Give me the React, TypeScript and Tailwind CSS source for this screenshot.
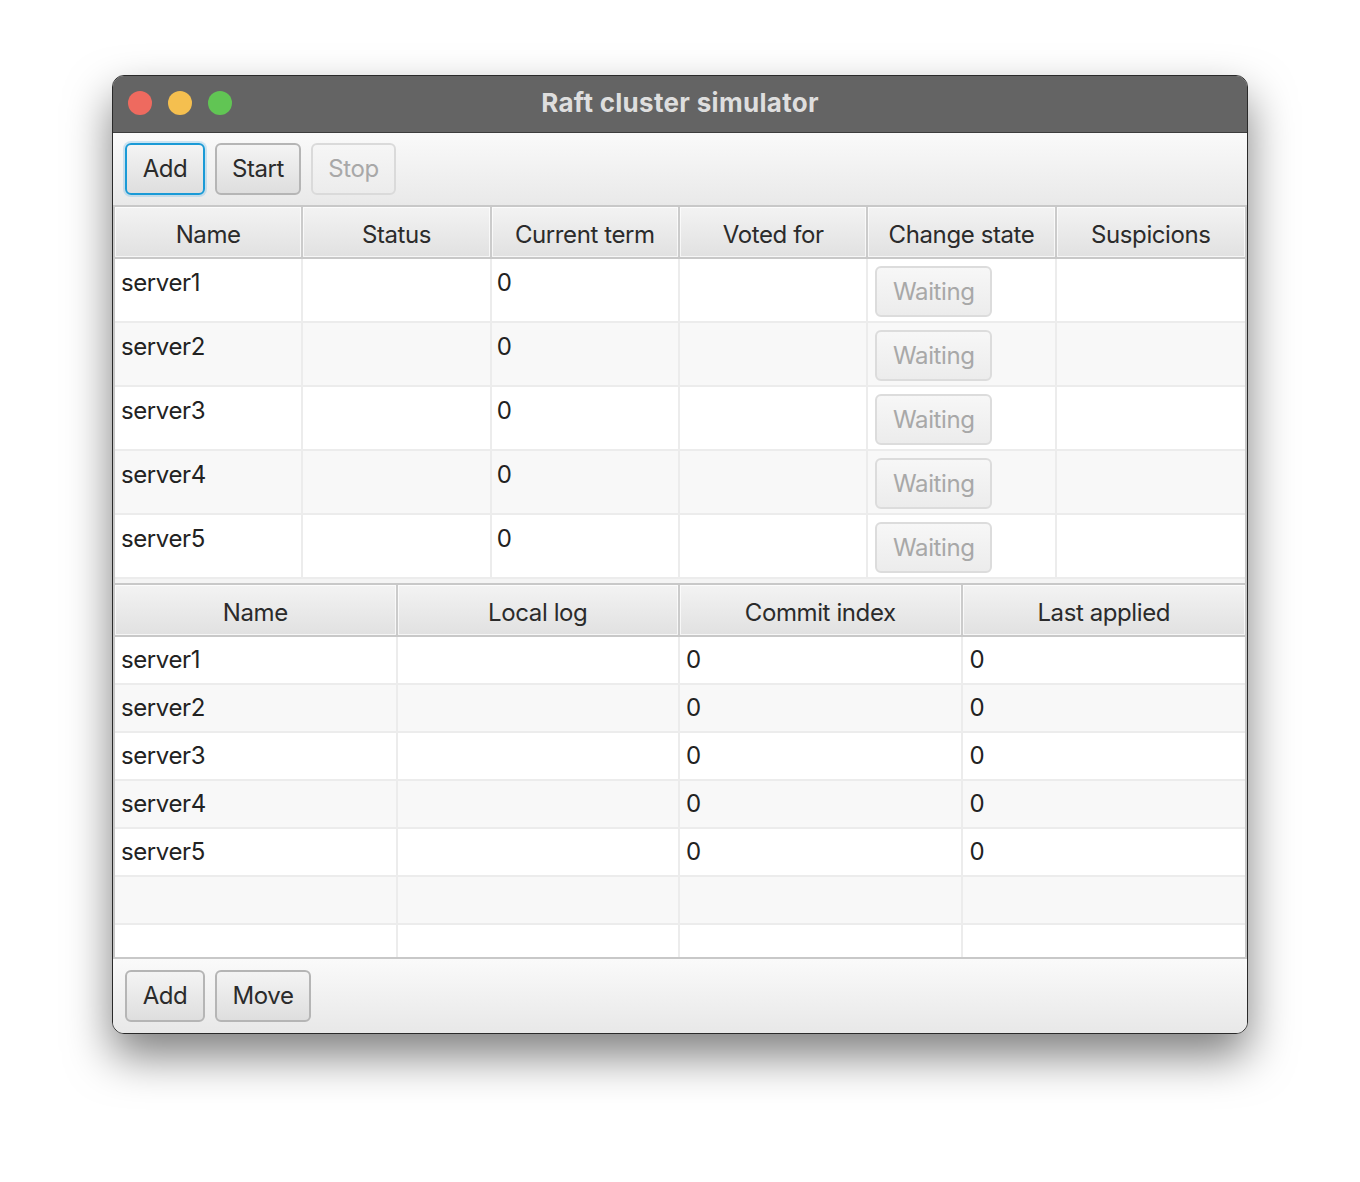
import React from "react";

const font = { fontFamily: "Inter, 'Noto Sans', sans-serif" };

function Btn({ label, focused, disabled, w }: { label: string; focused?: boolean; disabled?: boolean; w: string }) {
  const border = focused
    ? "border-[#1a9ad6] shadow-[0_0_0_2px_rgba(120,190,230,0.35)]"
    : disabled
    ? "border-[#dadada]"
    : "border-[#b5b5b5]";
  return (
    <div
      className={`${w} h-[52px] rounded-[6px] border-2 ${border} bg-gradient-to-b flex items-center justify-center text-[24px] tracking-[-0.4px] ${
        disabled ? "text-[#a8a8a8] from-[#f6f6f6] to-[#ececec]" : "text-[#2b2b2b] from-[#f4f4f4] to-[#dedede]"
      }`}
    >
      {label}
    </div>
  );
}

function HeaderCell({ label, last }: { label: string; last?: boolean }) {
  return (
    <div
      className={`h-[50px] flex items-center justify-center pt-[5px] text-[24px] tracking-[-0.4px] text-[#2b2b2b] bg-gradient-to-b from-[#f3f3f3] to-[#e1e1e1] shadow-[inset_0_0_0_1px_rgba(255,255,255,0.7)] ${
        last ? "" : "border-r-2 border-[#cbcbcb]"
      }`}
    >
      {label}
    </div>
  );
}

const servers = ["server1", "server2", "server3", "server4", "server5"];

export default function App() {
  return (
    <div className="w-[1360px] h-[1182px] bg-white pt-[75px] pl-[112px]" style={font}>
      <div className="w-[1136px] h-[959px] rounded-[12px] border border-[#2a2a2a] overflow-hidden shadow-[0_22px_45px_rgba(0,0,0,0.5)] flex flex-col bg-[#f2f2f2]">
        {/* title bar */}
        <div className="h-[57px] bg-[#646464] border-b border-[#3d3d3d] relative flex items-center justify-center pb-[3px] shrink-0">
          <div className="absolute left-[15px] top-[15px] flex gap-[16px]">
            <div className="w-[24px] h-[24px] rounded-full bg-[#ee6a5f]" />
            <div className="w-[24px] h-[24px] rounded-full bg-[#f5bf4f]" />
            <div className="w-[24px] h-[24px] rounded-full bg-[#61c554]" />
          </div>
          <div className="text-[26px] font-bold text-[#dedede] tracking-[0.3px]">Raft cluster simulator</div>
        </div>
        {/* toolbar */}
        <div className="h-[72px] shrink-0 bg-gradient-to-b from-[#fafafa] to-[#e9e9e9] flex items-start pt-[10px] pl-[12px] gap-[10px]">
          <Btn label="Add" focused w="w-[80px]" />
          <Btn label="Start" w="w-[86px]" />
          <Btn label="Stop" disabled w="w-[85px]" />
        </div>
        {/* table 1 */}
        <div className="border-2 border-[#c8c8c8] border-b-0 mx-0 bg-white">
          <div className="grid grid-cols-6 border-b-2 border-[#c8c8c8]">
            {["Name", "Status", "Current term", "Voted for", "Change state", "Suspicions"].map((h, i) => (
              <HeaderCell key={h} label={h} last={i === 5} />
            ))}
          </div>
          {servers.map((s, r) => (
            <div
              key={s}
              className={`grid grid-cols-6 h-[64px] border-b-2 border-[#ececec] ${r % 2 === 1 ? "bg-[#f8f8f8]" : "bg-white"}`}
            >
              <div className="border-r-2 border-[#ececec] pl-[6px] pt-[8px] text-[24px] tracking-[-0.4px] leading-[32px] text-[#222]">{s}</div>
              <div className="border-r-2 border-[#ececec]" />
              <div className="border-r-2 border-[#ececec] pl-[5px] pt-[8px] text-[24px] leading-[32px] text-[#222]">0</div>
              <div className="border-r-2 border-[#ececec]" />
              <div className="border-r-2 border-[#ececec] pl-[7px] pt-[7px]">
                <div className="w-[117px] h-[51px] rounded-[6px] border-2 border-[#dcdcdc] bg-gradient-to-b from-[#f7f7f7] to-[#ececec] flex items-center justify-center text-[24px] tracking-[-0.4px] text-[#a8a8a8]">
                  Waiting
                </div>
              </div>
              <div />
            </div>
          ))}
        </div>
        <div className="h-[4px] shrink-0 bg-[#f4f4f4] border-x-2 border-[#c8c8c8]" />
        {/* table 2 */}
        <div className="border-2 border-[#c8c8c8] bg-white flex-1 flex flex-col overflow-hidden">
          <div className="grid grid-cols-4 border-b-2 border-[#c8c8c8] shrink-0">
            {["Name", "Local log", "Commit index", "Last applied"].map((h, i) => (
              <HeaderCell key={h} label={h} last={i === 3} />
            ))}
          </div>
          {[...servers, "", "", ""].map((s, r) => (
            <div
              key={r}
              className={`grid grid-cols-4 h-[48px] shrink-0 border-b-2 border-[#ececec] ${r % 2 === 1 ? "bg-[#f8f8f8]" : "bg-white"}`}
            >
              <div className="border-r-2 border-[#ececec] pl-[6px] flex items-center text-[24px] tracking-[-0.4px] text-[#222]">{s}</div>
              <div className="border-r-2 border-[#ececec]" />
              <div className="border-r-2 border-[#ececec] pl-[6px] flex items-center text-[24px] text-[#222]">{s ? "0" : ""}</div>
              <div className="pl-[7px] flex items-center text-[24px] text-[#222]">{s ? "0" : ""}</div>
            </div>
          ))}
        </div>
        {/* bottom bar */}
        <div className="h-[74px] shrink-0 bg-gradient-to-b from-[#fafafa] to-[#e8e8e8] flex items-start pt-[11px] pl-[12px] gap-[10px]">
          <Btn label="Add" w="w-[80px]" />
          <Btn label="Move" w="w-[96px]" />
        </div>
      </div>
    </div>
  );
}
